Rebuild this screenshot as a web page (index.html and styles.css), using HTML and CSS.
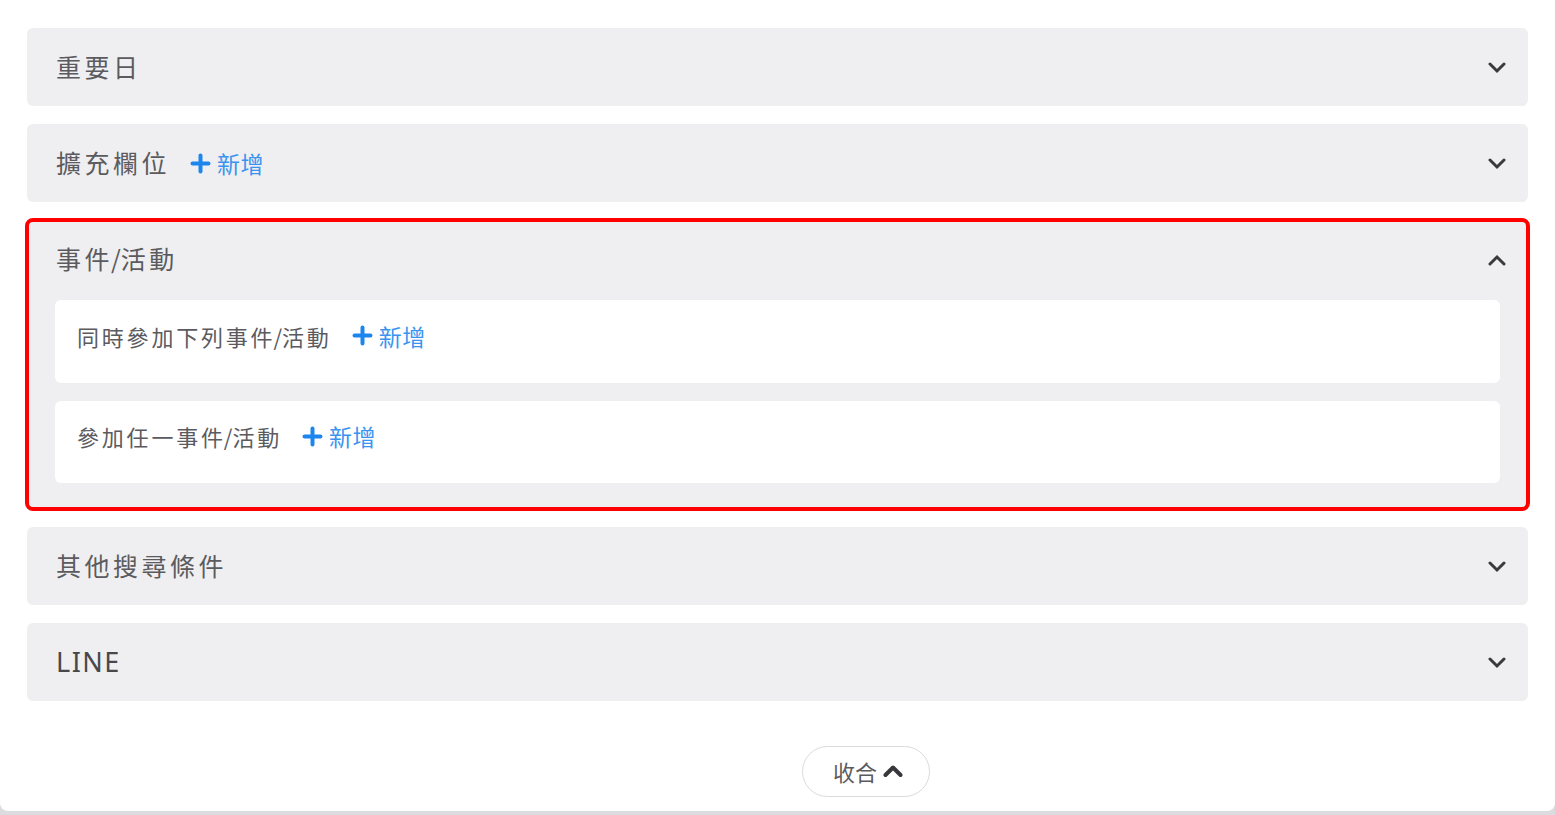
FILE: index.html
```html
<!DOCTYPE html>
<html lang="zh-Hant">

<head>
    <meta charset="UTF-8">
    <meta name="viewport" content="width=device-width, initial-scale=1.0">
    <title>搜尋條件</title>
    <link rel="stylesheet" href="styles.css">
</head>

<body>
    <div class="card">
        <div class="panel">
            <div class="panel-head">
                <span class="panel-title">重要日</span>
                <svg class="chevron" width="18" height="12" viewBox="0 0 18 12"><polyline points="2,2 9,9 16,2" /></svg>
            </div>
        </div>

        <div class="panel">
            <div class="panel-head">
                <span class="panel-title">擴充欄位</span>
                <a class="add-link">
                    <svg class="plus" width="21" height="21" viewBox="0 0 21 21"><path d="M10.5 2.5V18.5M2.5 10.5H18.5" /></svg>新增
                </a>
                <svg class="chevron" width="18" height="12" viewBox="0 0 18 12"><polyline points="2,2 9,9 16,2" /></svg>
            </div>
        </div>

        <div class="panel highlight">
            <div class="panel-head">
                <span class="panel-title">事件<span class="slash">/</span>活動</span>
                <svg class="chevron" width="18" height="12" viewBox="0 0 18 12"><polyline points="2,10 9,3 16,10" /></svg>
            </div>
            <div class="panel-body">
                <div class="sub-card">
                    <span class="sub-title">同時參加下列事件<span class="slash">/</span>活動</span>
                    <a class="add-link">
                        <svg class="plus" width="21" height="21" viewBox="0 0 21 21"><path d="M10.5 2.5V18.5M2.5 10.5H18.5" /></svg>新增
                    </a>
                </div>
                <div class="sub-card">
                    <span class="sub-title">參加任一事件<span class="slash">/</span>活動</span>
                    <a class="add-link">
                        <svg class="plus" width="21" height="21" viewBox="0 0 21 21"><path d="M10.5 2.5V18.5M2.5 10.5H18.5" /></svg>新增
                    </a>
                </div>
            </div>
        </div>

        <div class="panel">
            <div class="panel-head">
                <span class="panel-title">其他搜尋條件</span>
                <svg class="chevron" width="18" height="12" viewBox="0 0 18 12"><polyline points="2,2 9,9 16,2" /></svg>
            </div>
        </div>

        <div class="panel">
            <div class="panel-head">
                <span class="panel-title latin">LINE</span>
                <svg class="chevron" width="18" height="12" viewBox="0 0 18 12"><polyline points="2,2 9,9 16,2" /></svg>
            </div>
        </div>

        <div class="footer">
            <button class="collapse-btn">收合
                <svg width="20" height="14" viewBox="0 0 20 14"><polyline points="2.5,11 10,3.5 17.5,11" /></svg>
            </button>
        </div>
    </div>
</body>

</html>
```

FILE: styles.css
```css
body {
    margin: 0;
    background-color: #dcdce0;
    font-family: "Noto Sans CJK TC", "Noto Sans", sans-serif;
    height: 815px;
    overflow: hidden;
}

.card {
    background: #fff;
    height: 811px;
    border-radius: 0 0 8px 8px;
    padding: 28px 27px 0 27px;
    box-sizing: border-box;
    display: flex;
    flex-direction: column;
    gap: 18px;
}

.panel {
    background: #efeff1;
    border-radius: 6px;
    flex-shrink: 0;
}

.highlight {
    outline: 4px solid #ff0000;
    outline-offset: -2px;
}

.panel-head {
    height: 78px;
    box-sizing: border-box;
    display: flex;
    align-items: center;
    padding: 0 22px 0 29px;
}

.panel-title {
    font-size: 25px;
    letter-spacing: 3.5px;
    color: #5b5b5f;
    padding-bottom: 2px;
}

.panel-title.latin {
    font-size: 27px;
    letter-spacing: 1.5px;
    color: #48484c;
    font-family: "Noto Sans", "Noto Sans CJK TC", sans-serif;
}

.slash {
    letter-spacing: 0;
    margin-left: -2px;
}

.chevron {
    margin-left: auto;
    margin-top: 2px;
    fill: none;
    stroke: #3a3a3e;
    stroke-width: 3;
    stroke-linecap: round;
}

.add-link {
    display: flex;
    align-items: center;
    margin-left: 20px;
    font-size: 23px;
    letter-spacing: 0.5px;
    color: #3a94ef;
    cursor: pointer;
}

.plus {
    margin-right: 6px;
    fill: none;
    stroke: #1c86ee;
    stroke-width: 4;
    stroke-linecap: round;
}

.panel-body {
    display: flex;
    flex-direction: column;
    gap: 18px;
    padding: 2px 28px 26px 28px;
}

.sub-card {
    background: #fff;
    border-radius: 6px;
    height: 83px;
    box-sizing: border-box;
    display: flex;
    align-items: center;
    padding: 0 22px 12px 22px;
}

.sub-card + .sub-card {
    height: 82px;
}

.sub-title {
    font-size: 22px;
    letter-spacing: 2.8px;
    color: #5b5b5f;
}

.footer {
    margin-top: 27px;
    padding-left: 775px;
}

.collapse-btn {
    width: 128px;
    height: 51px;
    border: 1px solid #dadade;
    border-radius: 26px;
    background: #fff;
    font-family: "Noto Sans CJK TC", sans-serif;
    font-size: 22px;
    color: #5b5b5f;
    display: flex;
    align-items: center;
    justify-content: center;
    gap: 6px;
    padding: 0 0 2px 4px;
}

.collapse-btn svg {
    fill: none;
    stroke: #38383c;
    stroke-width: 4;
    stroke-linecap: round;
    stroke-linejoin: round;
}
```
